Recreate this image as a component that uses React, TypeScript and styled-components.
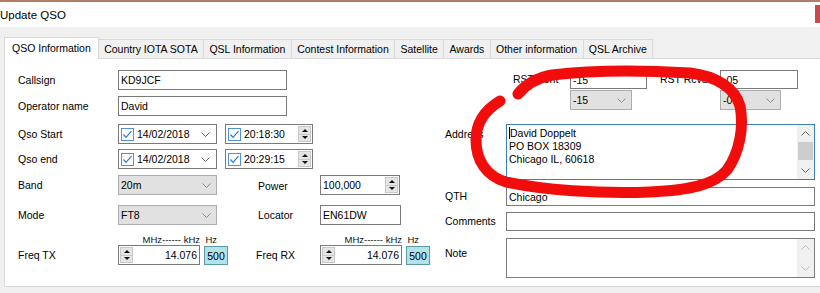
import React from "react";
import styled, { createGlobalStyle } from "styled-components";

const GlobalStyle = createGlobalStyle`
  html, body {
    margin: 0;
    padding: 0;
    background: #f0f0f0;
    overflow: hidden;
  }
  #root {
    width: 820px;
    height: 293px;
  }
`;

const Window = styled.div`
  position: relative;
  width: 820px;
  height: 293px;
  background: #f0f0f0;
  display: flex;
  flex-direction: column;
  font-family: "Liberation Sans", Arial, sans-serif;
  font-size: 10.5px;
  color: #000;
  overflow: hidden;
`;

const TopEdge = styled.div`
  height: 2px;
  flex: none;
  background: #b27e66;
`;

const TitleBar = styled.div`
  height: 25px;
  flex: none;
  background: #fff;
  display: flex;
  justify-content: space-between;
  align-items: center;
  font-size: 11.5px;
`;

const CloseEdge = styled.div`
  align-self: flex-start;
  margin-top: 3px;
  width: 5px;
  height: 18px;
  background: #c84b4c;
`;

const Body = styled.div`
  flex: 1;
  padding: 10px 0 0 4px;
  display: flex;
  flex-direction: column;
`;

const TabStrip = styled.div`
  position: relative;
  z-index: 1;
  display: flex;
  align-items: flex-end;
  height: 21px;
`;

const Tab = styled.div<{ $active?: boolean }>`
  box-sizing: border-box;
  height: ${(p) => (p.$active ? 22 : 19)}px;
  margin-bottom: ${(p) => (p.$active ? -1 : 0)}px;
  padding: ${(p) => (p.$active ? "0 7px 2px" : "0 5.35px")};
  border-top: 1px solid #d9d9d9;
  border-right: 1px solid #d9d9d9;
  border-left: ${(p) => (p.$active ? "1px solid #d9d9d9" : "none")};
  background: ${(p) => (p.$active ? "#fff" : "#f0f0f0")};
  display: flex;
  align-items: center;
  white-space: nowrap;
`;

const Panel = styled.div`
  height: 229px;
  box-sizing: border-box;
  background: #fff;
  border: 1px solid #d9d9d9;
  border-right: none;
  display: flex;
`;

const LeftCol = styled.div`
  width: 435px;
  box-sizing: border-box;
  padding: 11px 0 0 13px;
  display: flex;
  flex-direction: column;
`;

const RightCol = styled.div`
  flex: 1;
  padding: 11px 0 0 5px;
  display: flex;
  flex-direction: column;
`;

const Row = styled.div<{ $top?: number; $align?: string; $indent?: number }>`
  display: flex;
  align-items: ${(p) => p.$align ?? "center"};
  margin-top: ${(p) => p.$top ?? 0}px;
  margin-left: ${(p) => p.$indent ?? 0}px;
`;

const Label = styled.div<{ $w: number; $pad?: number; $h?: number; $gap?: number }>`
  width: ${(p) => p.$w}px;
  flex: none;
  margin-left: ${(p) => p.$gap ?? 0}px;
  padding-top: ${(p) => p.$pad ?? 0}px;
  line-height: ${(p) => p.$h ?? 13}px;
  white-space: nowrap;
`;

const Cell = styled.div<{ $w: number }>`
  width: ${(p) => p.$w}px;
  flex: none;
  display: flex;
  align-items: center;
  gap: 8px;
`;

const Stack = styled.div`
  display: flex;
  flex-direction: column;
  gap: 1px;
`;

const TextBox = styled.div<{ $w: number; $h?: number }>`
  width: ${(p) => p.$w}px;
  height: ${(p) => p.$h ?? 20}px;
  box-sizing: border-box;
  border: 1px solid #7a7a7a;
  background: #fff;
  padding: 0 1px 0 2px;
  display: flex;
  align-items: center;
  white-space: nowrap;
`;

const Combo = styled.div<{ $w: number }>`
  width: ${(p) => p.$w}px;
  height: 20px;
  box-sizing: border-box;
  border: 1px solid #adadad;
  background: #e1e1e1;
  padding: 0 5px 0 2px;
  display: flex;
  align-items: center;
  justify-content: space-between;
`;

const Picker = styled.div<{ $w: number }>`
  width: ${(p) => p.$w}px;
  height: 20px;
  box-sizing: border-box;
  border: 1px solid #7a7a7a;
  background: #fff;
  padding: 0 1px 0 2px;
  display: flex;
  align-items: center;
  gap: 3px;
`;

const PickerArrow = styled.span`
  margin-left: auto;
  margin-right: 5px;
  display: flex;
`;

const Spin = styled.div<{ $left?: boolean }>`
  width: 13px;
  height: 16px;
  box-sizing: border-box;
  border: 1px solid #c8c8c8;
  background: #e5e5e5;
  display: flex;
  flex-direction: column;
  margin-left: ${(p) => (p.$left ? 0 : "auto")};
  flex: none;
`;

const SpinHalf = styled.div<{ $down?: boolean }>`
  flex: 1;
  display: flex;
  align-items: center;
  justify-content: center;
  border-top: ${(p) => (p.$down ? "1px solid #c8c8c8" : "none")};
  &::after {
    content: "";
    border-left: 3px solid transparent;
    border-right: 3px solid transparent;
    ${(p) => (p.$down ? "border-top" : "border-bottom")}: 3px solid #111;
  }
`;

const FreqGroup = styled.div`
  display: flex;
  flex-direction: column;
`;

const FreqCaption = styled.div`
  display: flex;
  height: 11px;
  font-size: 9.5px;
  line-height: 11px;
  color: #111;
`;

const CaptionPart = styled.span<{ $w: number }>`
  width: ${(p) => p.$w}px;
  text-align: right;
  white-space: nowrap;
`;

const FreqControls = styled.div`
  display: flex;
  gap: 4px;
`;

const FreqBox = styled.div`
  width: 82px;
  height: 20px;
  box-sizing: border-box;
  border: 1px solid #7a7a7a;
  background: #fff;
  padding: 0 2px 0 1px;
  display: flex;
  align-items: center;
  justify-content: space-between;
`;

const HzBox = styled.div`
  width: 24px;
  height: 19px;
  margin-top: 1px;
  box-sizing: border-box;
  border: 1px solid #5b9aa3;
  background: #b3e3ea;
  display: flex;
  align-items: center;
  justify-content: center;
`;

const Memo = styled.div<{ $w: number; $h: number; $focus?: boolean }>`
  width: ${(p) => p.$w}px;
  height: ${(p) => p.$h}px;
  box-sizing: border-box;
  border: 1px solid ${(p) => (p.$focus ? "#3d7fb0" : "#7a7a7a")};
  background: #fff;
  display: flex;
`;

const MemoText = styled.div`
  flex: 1;
  padding: 2px 0 0 2px;
  line-height: 13px;
  white-space: pre;
`;

const Caret = styled.span`
  display: inline-block;
  width: 1px;
  height: 12px;
  background: #000;
  vertical-align: -2px;
`;

const ScrollBar = styled.div`
  width: 17px;
  flex: none;
  background: #f0f0f0;
  display: flex;
  flex-direction: column;
`;

const ScrollArrow = styled.div`
  height: 17px;
  flex: none;
  display: flex;
  align-items: center;
  justify-content: center;
`;

const Thumb = styled.div`
  height: 18px;
  margin: 0 1px;
  background: #cdcdcd;
`;

const Filler = styled.div`
  flex: 1;
`;

const Annotation = styled.svg`
  position: absolute;
  top: 0;
  left: 0;
  pointer-events: none;
`;

const Chevron = ({ dir = "down", color = "#606060" }: { dir?: "up" | "down"; color?: string }) => (
  <svg width="9" height="5" viewBox="0 0 9 5">
    <polyline
      points={dir === "down" ? "0.5,0.5 4.5,4.5 8.5,0.5" : "0.5,4.5 4.5,0.5 8.5,4.5"}
      fill="none"
      stroke={color}
      strokeWidth="1"
    />
  </svg>
);

const Check = () => (
  <svg width="13" height="13" viewBox="0 0 13 13" style={{ flex: "none" }}>
    <rect x="0.5" y="0.5" width="12" height="12" fill="#fff" stroke="#4f93d6" />
    <polyline points="2.5,6.5 5,9.3 10.5,3.2" fill="none" stroke="#2b7ad0" strokeWidth="1.2" />
  </svg>
);

const Spinner = ({ left }: { left?: boolean }) => (
  <Spin $left={left}>
    <SpinHalf />
    <SpinHalf $down />
  </Spin>
);

const tabs = [
  "QSO Information",
  "Country IOTA SOTA",
  "QSL Information",
  "Contest Information",
  "Satellite",
  "Awards",
  "Other information",
  "QSL Archive",
];

const Freq = () => (
  <FreqGroup>
    <FreqCaption>
      <CaptionPart $w={82}>MHz------ kHz</CaptionPart>
      <CaptionPart $w={17}>Hz</CaptionPart>
    </FreqCaption>
    <FreqControls>
      <FreqBox>
        <Spinner left />
        <span>14.076</span>
      </FreqBox>
      <HzBox>500</HzBox>
    </FreqControls>
  </FreqGroup>
);

export default function App() {
  return (
    <>
      <GlobalStyle />
      <Window>
        <TopEdge />
        <TitleBar>
          <span>Update QSO</span>
          <CloseEdge />
        </TitleBar>
        <Body>
          <TabStrip>
            {tabs.map((t, i) => (
              <Tab key={t} $active={i === 0}>
                {t}
              </Tab>
            ))}
          </TabStrip>
          <Panel>
            <LeftCol>
              <Row>
                <Label $w={100}>Callsign</Label>
                <TextBox $w={169}>KD9JCF</TextBox>
              </Row>
              <Row $top={6}>
                <Label $w={100}>Operator name</Label>
                <TextBox $w={169}>David</TextBox>
              </Row>
              <Row $top={8}>
                <Label $w={100}>Qso Start</Label>
                <Cell $w={200}>
                  <Picker $w={99}>
                    <Check />
                    14/02/2018
                    <PickerArrow>
                      <Chevron />
                    </PickerArrow>
                  </Picker>
                  <Picker $w={88}>
                    <Check />
                    20:18:30
                    <Spinner />
                  </Picker>
                </Cell>
              </Row>
              <Row $top={5}>
                <Label $w={100}>Qso end</Label>
                <Cell $w={200}>
                  <Picker $w={99}>
                    <Check />
                    14/02/2018
                    <PickerArrow>
                      <Chevron />
                    </PickerArrow>
                  </Picker>
                  <Picker $w={88}>
                    <Check />
                    20:29:15
                    <Spinner />
                  </Picker>
                </Cell>
              </Row>
              <Row $top={6}>
                <Label $w={100}>Band</Label>
                <Cell $w={140}>
                  <Combo $w={99}>
                    20m
                    <Chevron color="#8a8a8a" />
                  </Combo>
                </Cell>
                <Label $w={62} $pad={3}>Power</Label>
                <TextBox $w={80}>
                  100,000
                  <Spinner />
                </TextBox>
              </Row>
              <Row $top={10}>
                <Label $w={100}>Mode</Label>
                <Cell $w={140}>
                  <Combo $w={99}>
                    FT8
                    <Chevron color="#8a8a8a" />
                  </Combo>
                </Cell>
                <Label $w={62}>Locator</Label>
                <TextBox $w={81}>EN61DW</TextBox>
              </Row>
              <Row $top={9} $align="flex-end">
                <Label $w={100} $h={20}>Freq TX</Label>
                <Cell $w={138}>
                  <Freq />
                </Cell>
                <Label $w={64} $h={20}>Freq RX</Label>
                <Freq />
              </Row>
            </LeftCol>
            <RightCol>
              <Row $align="flex-start" $indent={68}>
                <Label $w={57} $h={19}>RST Sent</Label>
                <Stack>
                  <TextBox $w={77} $h={19}>-15</TextBox>
                  <Combo $w={62}>
                    -15
                    <Chevron color="#8a8a8a" />
                  </Combo>
                </Stack>
                <Label $w={60} $h={19} $gap={13}>RST Rcvd</Label>
                <Stack>
                  <TextBox $w={78} $h={19}>-05</TextBox>
                  <Combo $w={61}>
                    -05
                    <Chevron color="#8a8a8a" />
                  </Combo>
                </Stack>
              </Row>
              <Row $top={14} $align="flex-start">
                <Label $w={61} $pad={4}>Address</Label>
                <Memo $w={309} $h={56} $focus>
                  <MemoText>
                    <Caret />
                    {"David Doppelt\nPO BOX 18309\nChicago IL, 60618"}
                  </MemoText>
                  <ScrollBar>
                    <ScrollArrow>
                      <Chevron dir="up" />
                    </ScrollArrow>
                    <Thumb />
                    <Filler />
                    <ScrollArrow>
                      <Chevron />
                    </ScrollArrow>
                  </ScrollBar>
                </Memo>
              </Row>
              <Row $top={7}>
                <Label $w={61}>QTH</Label>
                <TextBox $w={309} $h={19}>Chicago</TextBox>
              </Row>
              <Row $top={6}>
                <Label $w={61}>Comments</Label>
                <TextBox $w={309} $h={19} />
              </Row>
              <Row $top={7} $align="flex-start">
                <Label $w={61} $pad={9}>Note</Label>
                <Memo $w={309} $h={40}>
                  <MemoText />
                  <ScrollBar>
                    <ScrollArrow>
                      <Chevron dir="up" color="#bcbcbc" />
                    </ScrollArrow>
                    <Filler />
                    <ScrollArrow>
                      <Chevron color="#bcbcbc" />
                    </ScrollArrow>
                  </ScrollBar>
                </Memo>
              </Row>
            </RightCol>
          </Panel>
        </Body>
        <Annotation width="820" height="293" viewBox="0 0 820 293">
          <path
            d="M 518 94 C 526 84, 536 78, 552 75 C 592 70, 642 70, 690 73 C 716 76, 735 88, 740 106 C 744 126, 740 152, 727 170 C 714 185, 690 190, 650 192 C 600 194, 542 190, 506 182 C 486 176, 476 160, 476 140 C 476 122, 485 110, 500 101"
            fill="none"
            stroke="#f20d0d"
            strokeWidth="11"
            strokeLinecap="round"
            strokeLinejoin="round"
          />
        </Annotation>
      </Window>
    </>
  );
}
